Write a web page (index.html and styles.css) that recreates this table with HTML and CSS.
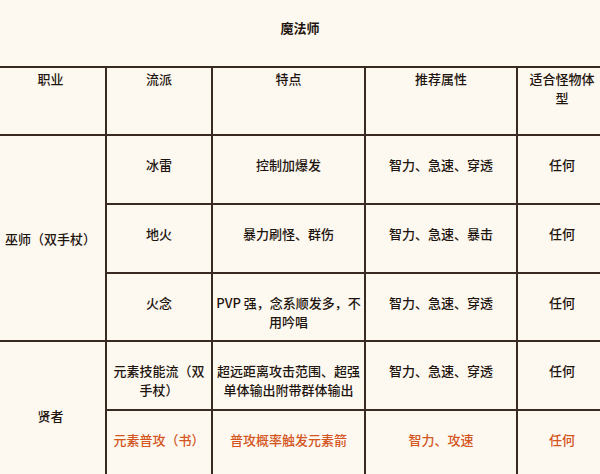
FILE: index.html
```html
<!DOCTYPE html>
<html lang="zh">
<head>
<meta charset="utf-8">
<link rel="stylesheet" href="styles.css">
</head>
<body>
<div class="title">魔法师</div>
<table class="grid">
  <colgroup>
    <col class="c1"><col class="c2"><col class="c3"><col class="c4"><col class="c5">
  </colgroup>
  <tr class="head">
    <td>职业</td>
    <td>流派</td>
    <td>特点</td>
    <td>推荐属性</td>
    <td>适合怪物体<br>型</td>
  </tr>
  <tr class="r1">
    <td rowspan="3" class="cls">巫师（双手杖）</td>
    <td>冰雷</td>
    <td>控制加爆发</td>
    <td>智力、急速、穿透</td>
    <td>任何</td>
  </tr>
  <tr class="r2">
    <td>地火</td>
    <td>暴力刷怪、群伤</td>
    <td>智力、急速、暴击</td>
    <td>任何</td>
  </tr>
  <tr class="r3">
    <td>火念</td>
    <td>PVP 强，念系顺发多，不<br>用吟唱</td>
    <td>智力、急速、穿透</td>
    <td>任何</td>
  </tr>
  <tr class="r4">
    <td rowspan="2" class="cls">贤者</td>
    <td>元素技能流（双<br>手杖）</td>
    <td>超远距离攻击范围、超强<br>单体输出附带群体输出</td>
    <td>智力、急速、穿透</td>
    <td>任何</td>
  </tr>
  <tr class="r5 hl">
    <td>元素普攻（书）</td>
    <td>普攻概率触发元素箭</td>
    <td>智力、攻速</td>
    <td>任何</td>
  </tr>
</table>
</body>
</html>
```

FILE: styles.css
```css
html, body {
  margin: 0;
  padding: 0;
  background: #fdf9f1;
  overflow: hidden;
}
body {
  width: 600px;
  height: 474px;
  font-family: "Noto Sans CJK SC", "Noto Sans", sans-serif;
  font-size: 13px;
  font-weight: 500;
  line-height: 19px;
  color: #1f150f;
}
.title {
  height: 66px;
  box-sizing: border-box;
  padding-top: 18px;
  text-align: center;
  font-weight: 700;
  line-height: 20px;
}
.grid {
  border-collapse: collapse;
  table-layout: fixed;
  width: 612px;
  margin-left: -6px;
}
.c1 { width: 111px; }
.c2 { width: 106px; }
.c3 { width: 153px; }
.c4 { width: 152px; }
.c5 { width: 90px; }
.grid td {
  border: 2px solid #3a2b22;
  text-align: center;
  vertical-align: top;
  padding: 19px 2px 0;
  white-space: nowrap;
  box-sizing: border-box;
}
.grid .head td {
  padding-top: 1px;
  height: 68px;
}
.grid td.cls {
  vertical-align: middle;
  padding-top: 0;
}
.r1 td, .r2 td { height: 69px; }
.r3 td { height: 68px; }
.r4 td { height: 69px; }
.r5 td { height: 80px; }
.hl td { color: #d4561e; }
```
